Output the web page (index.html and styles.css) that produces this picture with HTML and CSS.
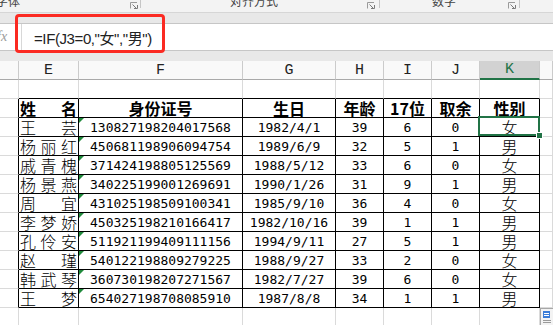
FILE: index.html
```html
<!DOCTYPE html>
<html lang="zh">
<head>
<meta charset="utf-8">
<title>Sheet</title>
<link rel="stylesheet" href="styles.css">
</head>
<body>
<div class="app">
  <div class="ribbon">
    <div class="grp g1"><span class="rlabel first">字体</span><svg class="launch" width="8" height="7" viewBox="0 0 8 7"><path d="M0.5 6.5V0.5H7" fill="none" stroke="#9a9a9a"/><path d="M2.5 2.5L6.5 6.5M4 6.5H7.5V3" fill="none" stroke="#7a7a7a"/></svg></div>
    <div class="sep"></div>
    <div class="grp g2"><span class="rlabel">对齐方式</span><svg class="launch" width="8" height="7" viewBox="0 0 8 7"><path d="M0.5 6.5V0.5H7" fill="none" stroke="#9a9a9a"/><path d="M2.5 2.5L6.5 6.5M4 6.5H7.5V3" fill="none" stroke="#7a7a7a"/></svg></div>
    <div class="sep"></div>
    <div class="grp g3"><span class="rlabel">数字</span><svg class="launch" width="8" height="7" viewBox="0 0 8 7"><path d="M0.5 6.5V0.5H7" fill="none" stroke="#9a9a9a"/><path d="M2.5 2.5L6.5 6.5M4 6.5H7.5V3" fill="none" stroke="#7a7a7a"/></svg></div>
    <div class="sep"></div>
  </div>
  <div class="band"></div>
  <div class="fbar">
    <div class="fx">fx</div>
    <div class="finput">=IF(J3=0,"女","男")</div>
  </div>
  <div class="band b2"></div>

  <div class="sheet">
    <!-- column headers -->
    <div class="c h"></div>
    <div class="c h">E</div>
    <div class="c h">F</div>
    <div class="c h">G</div>
    <div class="c h">H</div>
    <div class="c h">I</div>
    <div class="c h">J</div>
    <div class="c h sel">K</div>
    <div class="c h"></div>

    <!-- row 1 empty -->
    <div class="c"></div>
    <div class="c tt"></div><div class="c tt"></div><div class="c tt"></div><div class="c tt"></div><div class="c tt"></div><div class="c tt"></div><div class="c tt"></div>
    <div class="c"></div>

    <!-- table header -->
    <div class="c lb"></div>
    <div class="c t nm hd"><span>姓</span><span>名</span></div>
    <div class="c t hd">身份证号</div>
    <div class="c t hd">生日</div>
    <div class="c t hd">年龄</div>
    <div class="c t hd">17位</div>
    <div class="c t hd">取余</div>
    <div class="c t hd">性别</div>
    <div class="c"></div>

    <div class="c lb"></div>
    <div class="c t nm"><span>王</span><span>芸</span></div>
    <div class="c t num id">130827198204017568</div>
    <div class="c t num">1982/4/1</div>
    <div class="c t num">39</div>
    <div class="c t num">6</div>
    <div class="c t num">0</div>
    <div class="c t zh active">女<span class="handle"></span></div>
    <div class="c"></div>

    <div class="c lb"></div>
    <div class="c t nm"><span>杨</span><span>丽</span><span>红</span></div>
    <div class="c t num id">450681198906094754</div>
    <div class="c t num">1989/6/9</div>
    <div class="c t num">32</div>
    <div class="c t num">5</div>
    <div class="c t num">1</div>
    <div class="c t zh">男</div>
    <div class="c"></div>

    <div class="c lb"></div>
    <div class="c t nm"><span>戚</span><span>青</span><span>槐</span></div>
    <div class="c t num id">371424198805125569</div>
    <div class="c t num">1988/5/12</div>
    <div class="c t num">33</div>
    <div class="c t num">6</div>
    <div class="c t num">0</div>
    <div class="c t zh">女</div>
    <div class="c"></div>

    <div class="c lb"></div>
    <div class="c t nm"><span>杨</span><span>景</span><span>燕</span></div>
    <div class="c t num id">340225199001269691</div>
    <div class="c t num">1990/1/26</div>
    <div class="c t num">31</div>
    <div class="c t num">9</div>
    <div class="c t num">1</div>
    <div class="c t zh">男</div>
    <div class="c"></div>

    <div class="c lb"></div>
    <div class="c t nm"><span>周</span><span>宜</span></div>
    <div class="c t num id">431025198509100341</div>
    <div class="c t num">1985/9/10</div>
    <div class="c t num">36</div>
    <div class="c t num">4</div>
    <div class="c t num">0</div>
    <div class="c t zh">女</div>
    <div class="c"></div>

    <div class="c lb"></div>
    <div class="c t nm"><span>李</span><span>梦</span><span>娇</span></div>
    <div class="c t num id">450325198210166417</div>
    <div class="c t num">1982/10/16</div>
    <div class="c t num">39</div>
    <div class="c t num">1</div>
    <div class="c t num">1</div>
    <div class="c t zh">男</div>
    <div class="c"></div>

    <div class="c lb"></div>
    <div class="c t nm"><span>孔</span><span>伶</span><span>安</span></div>
    <div class="c t num id">511921199409111156</div>
    <div class="c t num">1994/9/11</div>
    <div class="c t num">27</div>
    <div class="c t num">5</div>
    <div class="c t num">1</div>
    <div class="c t zh">男</div>
    <div class="c"></div>

    <div class="c lb"></div>
    <div class="c t nm"><span>赵</span><span>瑾</span></div>
    <div class="c t num id">540122198809279225</div>
    <div class="c t num">1988/9/27</div>
    <div class="c t num">33</div>
    <div class="c t num">2</div>
    <div class="c t num">0</div>
    <div class="c t zh">女</div>
    <div class="c"></div>

    <div class="c lb"></div>
    <div class="c t nm"><span>韩</span><span>武</span><span>琴</span></div>
    <div class="c t num id">360730198207271567</div>
    <div class="c t num">1982/7/27</div>
    <div class="c t num">39</div>
    <div class="c t num">6</div>
    <div class="c t num">0</div>
    <div class="c t zh">女</div>
    <div class="c"></div>

    <div class="c lb"></div>
    <div class="c t nm"><span>王</span><span>梦</span></div>
    <div class="c t num id">654027198708085910</div>
    <div class="c t num">1987/8/8</div>
    <div class="c t num">34</div>
    <div class="c t num">1</div>
    <div class="c t num">1</div>
    <div class="c t zh">男</div>
    <div class="c"></div>

    <!-- trailing empty row -->
    <div class="c"></div><div class="c"></div><div class="c"></div><div class="c"></div><div class="c"></div><div class="c"></div><div class="c"></div><div class="c"></div><div class="c"></div>
  </div>

  <div class="redbox"></div>
  <svg class="paste" width="14" height="18" viewBox="0 0 14 18">
    <rect x="0.5" y="0.5" width="16" height="20" fill="#f3f3f3" stroke="#a8a8a8"/>
    <rect x="3" y="3" width="7" height="7" fill="#3b7dd8"/>
    <rect x="4" y="5" width="5" height="1" fill="#ffffff"/>
    <rect x="4" y="7" width="5" height="1" fill="#ffffff"/>
    <rect x="3" y="12" width="8" height="1" fill="#9a9a9a"/>
    <rect x="3" y="14" width="8" height="1" fill="#9a9a9a"/>
  </svg>
</div>
</body>
</html>
```

FILE: styles.css
```css
html, body {
  margin: 0;
  padding: 0;
  background: #ffffff;
}
body {
  width: 553px;
  height: 325px;
  overflow: hidden;
  font-family: "Noto Sans CJK SC", sans-serif;
}
.app {
  position: relative;
  width: 553px;
  height: 325px;
  overflow: hidden;
}

/* ribbon */
.ribbon {
  height: 12px;
  border-bottom: 1px solid #d6d6d6;
  background: #f3f3f3;
  display: flex;
  overflow: hidden;
}
.grp {
  display: grid;
  grid-template-columns: 1fr 8px;
  align-items: start;
}
.g1 { width: 140px; padding-right: 2px; box-sizing: border-box; }
.g2 { width: 238px; padding-right: 4px; box-sizing: border-box; }
.g3 { width: 139px; padding-right: 3px; box-sizing: border-box; }
.rlabel {
  font-size: 12px;
  line-height: 12px;
  color: #444444;
  margin-top: -5px;
  justify-self: center;
  white-space: nowrap;
}
.rlabel.first {
  justify-self: start;
  margin-left: -4px;
}
.launch {
  margin-top: 2px;
  display: block;
}
.sep {
  width: 1px;
  height: 8px;
  background: #c6c6c6;
}

.band {
  height: 10px;
  background: #e8e8e8;
}

/* formula bar */
.fbar {
  height: 26px;
  border-top: 1px solid #c6c6c6;
  border-bottom: 1px solid #c6c6c6;
  background: #ffffff;
  display: flex;
}
.fx {
  width: 24px;
  box-sizing: border-box;
  font-family: "Liberation Serif", serif;
  font-style: italic;
  font-size: 14px;
  color: #9a9a9a;
  display: flex;
  align-items: center;
  margin-left: -3px;
}
.finput {
  flex: 1;
  border-left: 1px solid #d8d8d8;
  padding-left: 12px;
  display: flex;
  align-items: center;
  font-family: "Liberation Sans", "Noto Sans CJK SC", sans-serif;
  font-size: 15px;
  letter-spacing: -0.4px;
  color: #222222;
  white-space: pre;
}

/* sheet grid */
.sheet {
  display: grid;
  grid-template-columns: 19px 60px 164px 93px 48px 48px 48px 60px 1fr;
  grid-auto-rows: 19px;
}
.c {
  box-sizing: border-box;
  border-right: 1px solid #dadada;
  border-bottom: 1px solid #dadada;
  display: flex;
  align-items: center;
  justify-content: center;
  color: #000000;
  white-space: nowrap;
  overflow: visible;
}
.h {
  background: #f9f9f9;
  border-right-color: #cbcbcb;
  border-bottom-color: #a9a9a9;
  font-family: "Liberation Mono", monospace;
  font-size: 15px;
  color: #222222;
}
.h.sel {
  background: #d2d2d2;
  border-bottom: 2px solid #217346;
  color: #217346;
}
.tt { border-bottom-color: #000000; }
.lb { border-right-color: #000000; }
.t {
  border-right-color: #000000;
  border-bottom-color: #000000;
}
.hd {
  font-family: "Noto Sans CJK SC", sans-serif;
  font-weight: 700;
  font-size: 16px;
  line-height: 18px;
}
.nm {
  justify-content: space-between;
  padding: 0 1px 0 1px;
  font-size: 16px;
  line-height: 18px;
}
.nm:not(.hd) { font-weight: 300; }
.num {
  font-family: "DejaVu Sans Mono", monospace;
  font-size: 13px;
  padding-top: 1px;
}
.zh {
  font-size: 16px;
  font-weight: 300;
  line-height: 18px;
}
.id { position: relative; }
.id::before {
  content: "";
  position: absolute;
  left: 0;
  top: 0;
  border-top: 5px solid #1f8a3b;
  border-right: 5px solid transparent;
}
.active { position: relative; }
.active::after {
  content: "";
  position: absolute;
  left: -2px;
  top: -2px;
  right: -1px;
  bottom: 0;
  border: 2px solid #217346;
}
.handle {
  position: absolute;
  right: -3px;
  bottom: -2px;
  width: 5px;
  height: 5px;
  background: #217346;
  box-shadow: 0 0 0 1px #ffffff;
  z-index: 2;
}

/* overlays */
.redbox {
  position: absolute;
  left: 15px;
  top: 14px;
  width: 150px;
  height: 39px;
  box-sizing: border-box;
  border: 3px solid #fb2a22;
  border-radius: 4px;
}
.paste {
  position: absolute;
  left: 540px;
  top: 308px;
}
```
